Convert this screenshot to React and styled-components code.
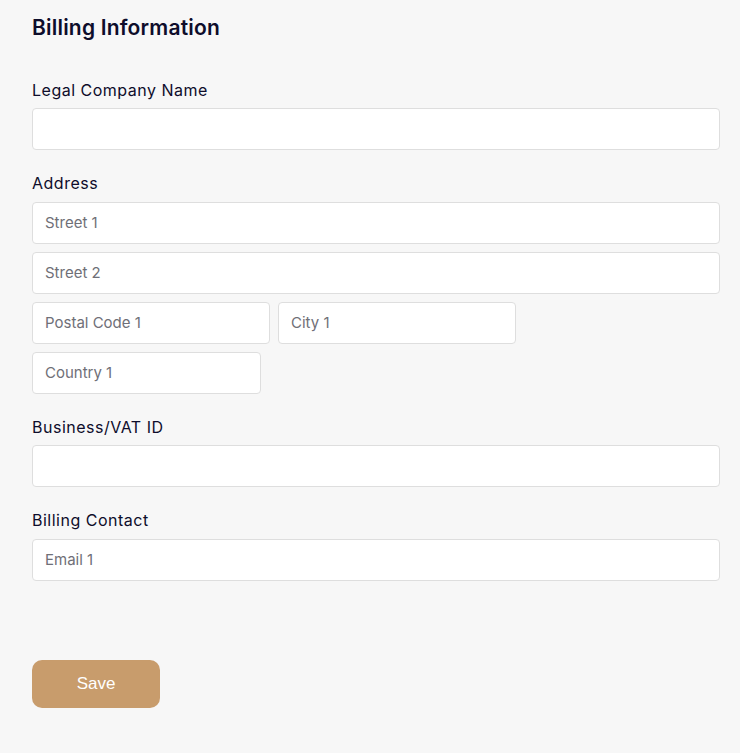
import styled, { createGlobalStyle } from "styled-components";

const GlobalStyle = createGlobalStyle`
body {
  margin: 0;
  background: #f7f7f7;
  font-family: Inter, "Noto Sans", sans-serif;
}
`

const Page = styled.main`
padding: 14px 20px 40px 32px;
display: flex;
flex-direction: column;
`

const Title = styled.h2`
margin: 0 0 38.5px 0;
font-size: 21px;
line-height: 28px;
font-weight: 600;
letter-spacing: 0.2px;
color: #0e0d2b;
`

const Section = styled.div`
display: flex;
flex-direction: column;
gap: 8px;
margin-bottom: 24px;
`

const Label = styled.label`
font-size: 16px;
line-height: 19.5px;
font-weight: 400;
letter-spacing: 0.5px;
color: #0e0d2b;
`

const Row = styled.div`
display: flex;
gap: 8px;
`

const Input = styled.input`
box-sizing: border-box;
height: 42px;
width: ${(p) => p.$w || "100%"};
padding: 0 12px;
background: #ffffff;
border: 1px solid #dedede;
border-radius: 4px;
font-family: Inter, "Noto Sans", sans-serif;
font-size: 15px;
color: #333;
outline: none;
&::placeholder {
  color: #6f6f77;
}
`

const SaveButton = styled.button`
margin-top: 55px;
width: 128px;
height: 48px;
border: none;
border-radius: 10px;
background: #c89c6c;
color: #ffffff;
font-family: "Liberation Sans", Arial, sans-serif;
font-size: 17px;
padding-top: 2px;
cursor: pointer;
`

function App() {
    return (
        <>
            <GlobalStyle />
            <Page>
                <Title>Billing Information</Title>
                <Section>
                    <Label>Legal Company Name</Label>
                    <Input />
                </Section>
                <Section>
                    <Label>Address</Label>
                    <Input placeholder="Street 1" />
                    <Input placeholder="Street 2" />
                    <Row>
                        <Input $w="238px" placeholder="Postal Code 1" />
                        <Input $w="238px" placeholder="City 1" />
                    </Row>
                    <Input $w="229px" placeholder="Country 1" />
                </Section>
                <Section>
                    <Label>Business/VAT ID</Label>
                    <Input />
                </Section>
                <Section>
                    <Label>Billing Contact</Label>
                    <Input placeholder="Email 1" />
                </Section>
                <SaveButton>Save</SaveButton>
            </Page>
        </>
    )
}

export default App;
